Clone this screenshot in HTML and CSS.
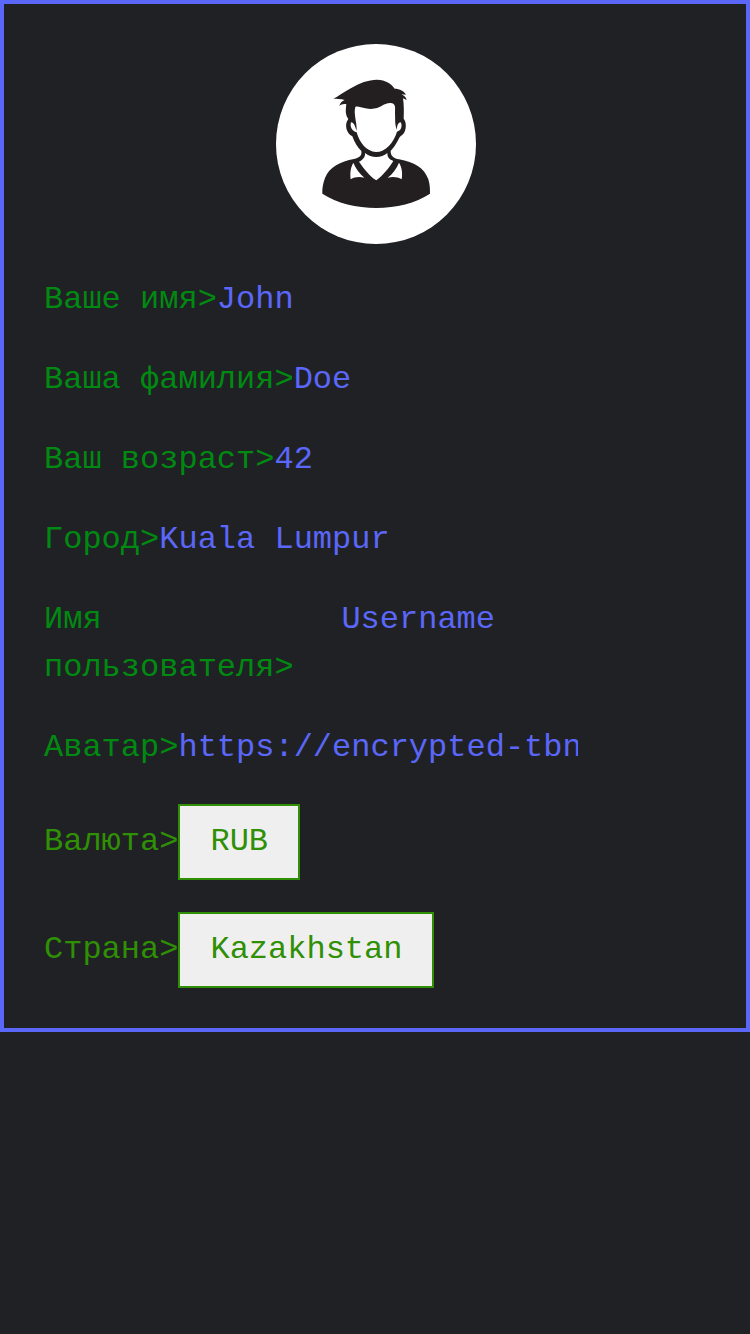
FILE: index.html
```
<!DOCTYPE html>
<html lang="ru">
<head>
<meta charset="utf-8">
<title>Профиль</title>
<link rel="stylesheet" href="styles.css">
</head>
<body>
<main class="profile">
  <svg class="avatar" viewBox="18 18 600 600" aria-hidden="true">
    <path class="ink" d="M190 182C222 166 266 126 321 125C347 126 364 137 374 152C390 152 402 159 408 170L394 169C402 173 408 178 410 186L399 181C402 201 402 222 401 242C410 252 410 277 399 289C392 294 389 297 385 305C378 319 369 331 362 338C361 355 373 361 387 364C433 373 462 389 475 424C480 440 480 454 480 467C394 524 244 524 157 467C156 452 159 436 165 420C179 386 211 371 252 363C269 359 276 353 274 339C263 329 253 312 247 295C229 287 222 259 235 243C225 230 227 216 229 199C221 197 214 199 208 204C210 196 216 189 224 186C212 182 199 182 190 182Z"/>
    <path class="paper" d="M256 207C260 203 274 208 286 211C331 219 335 195 361 195C379 195 375 211 375 225C376 241 374 256 380 275C382 263 383 254 392 253C398 262 394 279 381 281C371 314 347 342 318 342C289 341 268 313 260 283C246 280 239 266 243 253C254 255 254 265 260 278C261 255 250 225 256 207Z"/>
    <path class="paper" d="M285 345C304 361 334 361 352 345C352 359 358 364 370 369C358 389 337 414 319 427C299 415 281 391 267 371C280 365 286 357 285 345Z"/>
    <path class="paper" d="M250 374C257 392 269 406 283 419C269 415 254 416 242 424C240 407 241 389 250 374ZM387 374C380 391 368 408 353 419C367 415 383 416 395 424C398 406 396 388 387 374Z"/>
  </svg>
  <div class="row"><span class="label">Ваше имя&gt;</span><span class="value">John</span></div>
  <div class="row"><span class="label">Ваша фамилия&gt;</span><span class="value">Doe</span></div>
  <div class="row"><span class="label">Ваш возраст&gt;</span><span class="value">42</span></div>
  <div class="row"><span class="label">Город&gt;</span><span class="value">Kuala Lumpur</span></div>
  <div class="row"><span class="label label-wrap">Имя пользователя&gt;</span><span class="value">Username</span></div>
  <div class="row"><span class="label">Аватар&gt;</span><span class="value">https://encrypted-tbn0</span></div>
  <div class="row row-select"><span>Валюта&gt;</span><button class="select">RUB</button></div>
  <div class="row row-select"><span>Страна&gt;</span><button class="select">Kazakhstan</button></div>
</main>
</body>
</html>
```
FILE: styles.css
```
* { box-sizing: border-box; }
body {
  margin: 0;
  min-height: 100vh;
  background: #202124;
  font: 32px/48px "Liberation Mono", monospace;
}
.profile {
  display: flex;
  flex-direction: column;
  gap: 32px;
  padding: 40px;
  border: 4px solid #5b67f9;
}
.avatar {
  align-self: center;
  width: 200px;
  height: 200px;
  margin-left: 2px;
  border-radius: 50%;
  background: #fff;
}
.ink { fill: #231f20; }
.paper { fill: #fff; }
.row { display: flex; align-items: flex-start; }
.label { flex: none; color: #008a12; white-space: nowrap; }
.label-wrap { width: 297.4px; white-space: normal; }
.value {
  flex: 0 1 400px;
  min-width: 0;
  overflow: hidden;
  white-space: nowrap;
  color: #5b67f9;
}
.row-select { align-items: center; color: #2f8f05; }
.select {
  padding: 12px 30px;
  border: 2px solid #2f8f05;
  border-radius: 0;
  background: #efefef;
  color: inherit;
  font: inherit;
}
```
